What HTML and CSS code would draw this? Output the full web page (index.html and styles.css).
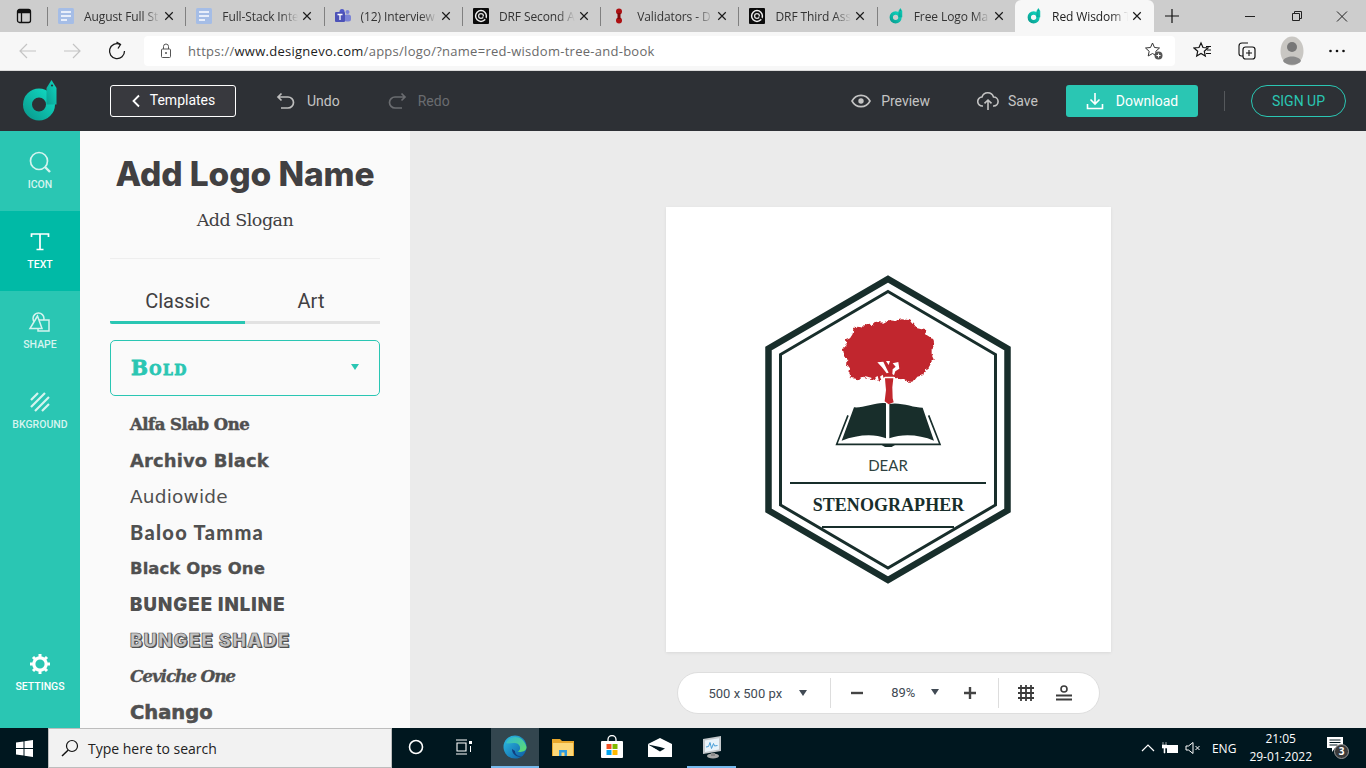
FILE: index.html
```html
<!DOCTYPE html>
<html lang="en">
<head>
<meta charset="utf-8">
<title>Red Wisdom Tree and Book</title>
<link rel="stylesheet" href="styles.css">
</head>
<body>
<svg class="defs" width="0" height="0">
  <defs>
    <linearGradient id="bg" x1="0" y1="1" x2="1" y2="0"><stop offset="0" stop-color="#0a9f92"/><stop offset="1" stop-color="#10d6bf"/></linearGradient>
    <filter id="rough" x="-5%" y="-5%" width="110%" height="110%"><feTurbulence type="fractalNoise" baseFrequency="0.09" numOctaves="2" seed="4"/><feDisplacementMap in="SourceGraphic" scale="11" xChannelSelector="R" yChannelSelector="G"/></filter>
  </defs>
  <symbol id="x" viewBox="0 0 12 12"><path d="M1.500 1.500l9 9M10.500 1.500l-9 9" fill="none" stroke="#1a1a1a" stroke-width="1.400"/></symbol>
  <symbol id="doc" viewBox="0 0 16 16"><rect width="16" height="16" rx="1.500" fill="#a5bde6"/><path d="M3 4h10M3 8h10M3 12h6" stroke="#e8eefa" stroke-width="1.800"/></symbol>
  <symbol id="swirl" viewBox="0 0 16 16"><rect width="16" height="16" rx="1" fill="#0b0b0b"/><circle cx="8" cy="8" r="5.400" fill="none" stroke="#eee" stroke-width="1.500"/><circle cx="8" cy="8" r="2.400" fill="none" stroke="#ddd" stroke-width="1.300"/><path d="M10.500 8.500l3 3" stroke="#0b0b0b" stroke-width="1.400"/></symbol>
  <symbol id="ring" viewBox="0 0 36 42">
    <circle cx="17" cy="24.500" r="11.500" fill="none" stroke="url(#bg)" stroke-width="9"/>
    <path d="M24.500 24.500V8l5-8 5 8v16.500z" fill="url(#bg)"/>
    <circle cx="30" cy="5.500" r="1.100" fill="#2d3035"/>
  </symbol>
</svg>

<header class="tabstrip">
  <div class="tabmenu">
    <svg width="16" height="16" viewBox="0 0 16 16"><rect x="1.500" y="1.500" width="13" height="13" rx="2" fill="none" stroke="#111" stroke-width="1.300"/><path d="M1.500 4.500h13M5.500 4.500v10" fill="none" stroke="#111" stroke-width="1.300"/><rect x="2" y="2" width="12" height="2.500" fill="#111"/></svg>
  </div>
  <div class="tab"><svg class="fav" viewBox="0 0 16 16"><use href="#doc"/></svg><span class="tabname">August Full St</span><svg class="tabx"><use href="#x"/></svg></div>
  <div class="tab"><svg class="fav" viewBox="0 0 16 16"><use href="#doc"/></svg><span class="tabname">Full-Stack Inte</span><svg class="tabx"><use href="#x"/></svg></div>
  <div class="tab"><svg class="fav" viewBox="0 0 16 16"><circle cx="12.500" cy="4" r="2" fill="#7b83d6"/><rect x="9" y="6.500" width="7" height="7" rx="2.500" fill="#7b83d6"/><circle cx="7" cy="3.500" r="2.500" fill="#5059c9"/><rect x="0" y="4" width="10" height="10" rx="1" fill="#4c52b8"/><path d="M2.500 6.500h5M5 6.500V12" stroke="#fff" stroke-width="1.300"/></svg><span class="tabname">(12) Interview</span><svg class="tabx"><use href="#x"/></svg></div>
  <div class="tab"><svg class="fav" viewBox="0 0 16 16"><use href="#swirl"/></svg><span class="tabname">DRF Second A</span><svg class="tabx"><use href="#x"/></svg></div>
  <div class="tab"><svg class="fav" viewBox="0 0 16 16"><circle cx="8" cy="3.500" r="3" fill="#ad1012"/><circle cx="8" cy="12.500" r="3" fill="#ad1012"/><rect x="6.500" y="5" width="3" height="6" fill="#7c0a0c"/></svg><span class="tabname">Validators - D</span><svg class="tabx"><use href="#x"/></svg></div>
  <div class="tab"><svg class="fav" viewBox="0 0 16 16"><use href="#swirl"/></svg><span class="tabname">DRF Third Ass</span><svg class="tabx"><use href="#x"/></svg></div>
  <div class="tab tab-last"><svg class="fav" viewBox="0 0 36 42"><use href="#ring"/></svg><span class="tabname">Free Logo Ma</span><svg class="tabx"><use href="#x"/></svg></div>
  <div class="tab tab-active"><svg class="fav" viewBox="0 0 36 42"><use href="#ring"/></svg><span class="tabname">Red Wisdom T</span><svg class="tabx"><use href="#x"/></svg></div>
  <div class="newtab"><svg width="16" height="16" viewBox="0 0 16 16"><path d="M8 1v14M1 8h14" stroke="#111" stroke-width="1.200"/></svg></div>
  <div class="winctl">
    <svg width="46" height="16" viewBox="0 0 46 16"><path d="M18 8.500h10" stroke="#222" stroke-width="1"/></svg>
    <svg width="46" height="16" viewBox="0 0 46 16"><path d="M19.500 5.500h7v7h-7zM21.500 5.500v-2h7v7h-2" fill="none" stroke="#222" stroke-width="1"/></svg>
    <svg width="46" height="16" viewBox="0 0 46 16"><path d="M18 3.500l10 10M28 3.500l-10 10" stroke="#222" stroke-width="1"/></svg>
  </div>
</header>

<nav class="toolbar">
  <svg class="nav-ic" width="20" height="20" viewBox="0 0 20 20"><path d="M18 10H2M9 3l-7 7 7 7" fill="none" stroke="#c4c4c4" stroke-width="1.200"/></svg>
  <svg class="nav-ic" width="20" height="20" viewBox="0 0 20 20"><path d="M2 10h16M11 3l7 7-7 7" fill="none" stroke="#c4c4c4" stroke-width="1.200"/></svg>
  <svg class="nav-ic" width="20" height="20" viewBox="0 0 20 20"><path d="M13 3.300A7.500 7.500 0 1 0 17.500 10" fill="none" stroke="#1a1a1a" stroke-width="1.300"/><path d="M9.500 1l4 2.500-2.500 4" fill="none" stroke="#1a1a1a" stroke-width="1.300"/></svg>
  <div class="omnibox">
    <svg class="lock" width="14" height="16" viewBox="0 0 14 16"><rect x="2.500" y="6" width="9" height="8.500" rx="1" fill="none" stroke="#555"/><path d="M4.500 6V3.500a2.500 2.500 0 0 1 5 0V6" fill="none" stroke="#555"/><circle cx="7" cy="10" r="1" fill="#555"/></svg>
    <span class="url"><span class="dim">https://</span><span class="host">www.designevo.com</span><span class="dim">/apps/logo/?name=red-wisdom-tree-and-book</span></span>
    <svg class="favadd" width="20" height="20" viewBox="0 0 20 20"><path d="M8.500 2l2 4.500 5 .5-3.700 3.300 1 4.700-4.300-2.500L4.200 15l1-4.700L1.500 7l5-.5z" fill="none" stroke="#333"/><circle cx="14.500" cy="14.500" r="4" fill="#555"/><path d="M12.500 14.500h4M14.500 12.500v4" stroke="#fff"/></svg>
  </div>
  <div class="browser-ic">
    <svg width="20" height="20" viewBox="0 0 20 20"><path d="M8 2l2 4.500 5 .5-3.700 3.300 1 4.700L8 12.500 3.700 15l1-4.700L1 7l5-.5z" fill="none" stroke="#111" stroke-width="1.200"/><path d="M13 5.500h5M14 9h4M13 12.500h5" stroke="#111"/></svg>
    <svg width="20" height="20" viewBox="0 0 20 20"><path d="M6 15H4.500A2.500 2.500 0 0 1 2 12.500V5a3 3 0 0 1 3-3h6" fill="none" stroke="#111" stroke-width="1.100"/><rect x="6" y="6" width="12" height="12" rx="2.500" fill="none" stroke="#111" stroke-width="1.200"/><path d="M12 9v6M9 12h6" stroke="#111" stroke-width="1.100"/></svg>
    <svg class="avatar" width="24" height="30" viewBox="0 0 24 30"><ellipse cx="12" cy="15" rx="11.500" ry="14.500" fill="#c9c7c3"/><circle cx="12" cy="11" r="5" fill="#777"/><path d="M3 25c2-6 16-6 18 0-3 5-15 5-18 0z" fill="#8a8a8a"/></svg>
    <svg width="20" height="20" viewBox="0 0 20 20"><circle cx="3.500" cy="10" r="1.300" fill="#111"/><circle cx="10" cy="10" r="1.300" fill="#111"/><circle cx="16.500" cy="10" r="1.300" fill="#111"/></svg>
  </div>
</nav>

<section class="appbar">
  <svg class="brand" width="36" height="42" viewBox="0 0 36 42"><use href="#ring"/></svg>
  <button class="btn-templates"><svg width="10" height="14" viewBox="0 0 10 14"><path d="M8 1.500L2.500 7 8 12.500" fill="none" stroke="#fff" stroke-width="1.800"/></svg><span class="tpl-label">Templates</span></button>
  <div class="action action-undo"><svg width="20" height="18" viewBox="0 0 20 18"><path d="M5.500 1.500L2 5l3.500 3.500M2 5h10a5.500 5.500 0 0 1 0 11H5" fill="none" stroke="#bdbdbd" stroke-width="1.700"/></svg>Undo</div>
  <div class="action action-redo"><svg width="20" height="18" viewBox="0 0 20 18"><path d="M14.500 1.500L18 5l-3.500 3.500M18 5H8a5.500 5.500 0 0 0 0 11h7" fill="none" stroke="#6a6c70" stroke-width="1.700"/></svg>Redo</div>
  <div class="spacer"></div>
  <div class="action action-preview"><svg width="20" height="14" viewBox="0 0 20 14"><path d="M1 7c4-7.500 14-7.500 18 0-4 7.500-14 7.500-18 0z" fill="none" stroke="#c4c4c4" stroke-width="1.600"/><circle cx="10" cy="7" r="2.700" fill="#c4c4c4"/></svg>Preview</div>
  <div class="action action-save"><svg width="22" height="20" viewBox="0 0 22 20"><path d="M6 15H5.500a4.500 4.500 0 0 1-.5-9 6 6 0 0 1 11.500 0 4.500 4.500 0 0 1 .2 9H16" fill="none" stroke="#c4c4c4" stroke-width="1.600"/><path d="M11 19V9M7.500 12.300L11 9l3.500 3.300" fill="none" stroke="#c4c4c4" stroke-width="1.600"/></svg>Save</div>
  <button class="btn-download"><svg width="18" height="18" viewBox="0 0 18 18"><path d="M9 1v11M4.500 7.500L9 12l4.500-4.500M1.500 12v4.500h15V12" fill="none" stroke="#fff" stroke-width="1.600"/></svg>Download</button>
  <span class="vsep"></span>
  <button class="btn-signup">SIGN UP</button>
</section>

<main class="workspace">
  <aside class="rail">
    <div class="rail-item">
      <svg width="24" height="24" viewBox="0 0 24 24"><circle cx="11" cy="11" r="8.500" fill="none" stroke="#d5f4ef" stroke-width="1.700"/><path d="M17 17l5 5" stroke="#d5f4ef" stroke-width="2.400"/></svg>
      <span>ICON</span>
    </div>
    <div class="rail-item rail-active">
      <svg width="24" height="24" viewBox="0 0 24 24"><path d="M3.500 7V4h17v3M12 4v15M8.500 19.500h7" fill="none" stroke="#fff" stroke-width="1.700"/></svg>
      <span>TEXT</span>
    </div>
    <div class="rail-item">
      <svg width="24" height="24" viewBox="0 0 24 24"><circle cx="10.500" cy="8.500" r="5.500" fill="none" stroke="#d5f4ef" stroke-width="1.500"/><rect x="10" y="10" width="11" height="11" fill="#2ac6b3" stroke="#d5f4ef" stroke-width="1.500"/><path d="M9.500 6L2 18.500h12z" fill="#2ac6b3" stroke="#d5f4ef" stroke-width="1.500"/></svg>
      <span>SHAPE</span>
    </div>
    <div class="rail-item">
      <svg width="24" height="24" viewBox="0 0 24 24"><path d="M3 10L10 3M3 17L17 3M7 21L21 7M14 21l7-7" stroke="#d5f4ef" stroke-width="2.200" fill="none"/></svg>
      <span>BKGROUND</span>
    </div>
    <div class="rail-item rail-settings">
      <svg width="24" height="24" viewBox="0 0 24 24"><circle cx="12" cy="12" r="6.200" fill="none" stroke="#fff" stroke-width="3.200"/><path d="M12 2v3.500M12 18.500V22M2 12h3.500M18.500 12H22M5 5l2.500 2.500M16.500 16.500L19 19M19 5l-2.500 2.500M7.500 16.500L5 19" stroke="#fff" stroke-width="3"/></svg>
      <span>SETTINGS</span>
    </div>
  </aside>

  <section class="panel">
    <h1 class="logo-name">Add Logo Name</h1>
    <p class="logo-slogan">Add Slogan</p>
    <hr class="panel-rule">
    <div class="font-tabs">
      <span class="font-tab font-tab-on">Classic</span>
      <span class="font-tab font-tab-art">Art</span>
    </div>
    <div class="font-select"><span>Bold</span><i class="caret"></i></div>
    <ul class="font-list">
      <li class="f-alfa">Alfa Slab One</li>
      <li class="f-archivo">Archivo Black</li>
      <li class="f-audio">Audiowide</li>
      <li class="f-baloo">Baloo Tamma</li>
      <li class="f-ops">Black Ops One</li>
      <li class="f-inline">BUNGEE INLINE</li>
      <li class="f-shade">BUNGEE SHADE</li>
      <li class="f-ceviche">Ceviche One</li>
      <li class="f-chango">Chango</li>
    </ul>
  </section>

  <section class="stage">
    <div class="canvas">
      <svg class="logo" width="445" height="445" viewBox="666 207 445 445">
        <path d="M888 279L1007.500 348.500V510.500L888 580 768.500 510.500V348.500z" fill="none" stroke="#182e2b" stroke-width="6.500"/>
        <path d="M888 291.500L995.500 354.500V505L888 568 780.500 505V354.500z" fill="none" stroke="#182e2b" stroke-width="3"/>
        <g transform="translate(830 310) scale(.3333)">
          <path filter="url(#rough)" fill="#c1272d" d="M70 60L80 50 95 52 105 42 125 45 135 35 160 38 175 30 195 33 215 28 235 30 248 38 262 55 285 60 290 75 310 88 313 105 305 118 305 135 312 150 303 160 295 175 285 178 280 195 262 200 250 215 235 215 222 207 205 208 195 200 165 200 150 212 135 210 115 205 100 200 85 208 65 205 58 190 60 175 48 160 52 150 42 135 38 118 50 105 48 90 60 85 68 72z"/>
          <path fill="#c1272d" d="M165 205L190 205 187 232 188 265 191 277 176 283 164 274 168 240 166 218z"/>
          <path fill="#fff" d="M142 157L160 155 170 176 176 188 170 190 156 172zM168 153L180 153 176 165zM188 160L205 156 208 176 196 184 192 196 187 192 188 178 197 170zM104 198L124 203 124 208 108 204zM136 202L143 198 146 210 138 210zM150 200L158 194 162 208 154 210z"/>
          <path fill="#182e2b" d="M72 292C100 295 140 275 168 280V385C130 370 80 375 35 392zM178 282C210 275 250 293 278 293L312 392C270 375 220 370 178 385z"/>
          <path d="M54 316L20 403H330L296 316" fill="none" stroke="#182e2b" stroke-width="5"/>
          <path d="M155 405H195L185 411H165z" fill="#182e2b"/>
        </g>
        <path class="rule" d="M790 483h196M822 527h132" stroke="#182e2b" stroke-width="1.800"/>
        <text class="logo-dear" x="888" y="470.500" text-anchor="middle">DEAR</text>
        <text class="logo-steno" x="888.500" y="510.500" text-anchor="middle">STENOGRAPHER</text>
      </svg>
    </div>
    <div class="canvas-bar">
      <span class="size">500 x 500 px</span><i class="caret-dark caret-size"></i>
      <span class="bar-sep"></span>
      <svg class="minus" width="12" height="12" viewBox="0 0 12 12"><path d="M0 6h12" stroke="#444" stroke-width="2.400"/></svg>
      <span class="zoomv">89%</span><i class="caret-dark caret-zoom"></i>
      <svg class="plus" width="12" height="12" viewBox="0 0 12 12"><path d="M0 6h12M6 0v12" stroke="#444" stroke-width="2.400"/></svg>
      <span class="bar-sep bar-sep2"></span>
      <svg class="grid" width="16" height="16" viewBox="0 0 16 16"><path d="M0 3h16M0 8h16M0 13h16M3 0v16M8 0v16M13 0v16" stroke="#3c3c3c" stroke-width="1.800"/></svg>
      <svg class="align" width="16" height="16" viewBox="0 0 16 16"><circle cx="8" cy="4" r="3" fill="none" stroke="#3c3c3c" stroke-width="1.600"/><path d="M0 10.500h16M0 14.500h16" stroke="#3c3c3c" stroke-width="2"/></svg>
    </div>
  </section>
</main>

<footer class="taskbar">
  <div class="start"><svg width="17" height="17" viewBox="0 0 17 17"><path d="M0 2.500L7.500 1.400V8H0zM8.500 1.300L17 0v8H8.500zM0 9h7.500v6.600L0 14.500zM8.500 9H17v8l-8.500-1.300z" fill="#fff"/></svg></div>
  <div class="searchbox"><svg width="18" height="18" viewBox="0 0 18 18"><circle cx="11" cy="7" r="5.500" fill="none" stroke="#111" stroke-width="1.200"/><path d="M7 11.200L1 17" stroke="#111" stroke-width="1.500"/></svg><span>Type here to search</span></div>
  <div class="task task-cortana"><svg width="16" height="16" viewBox="0 0 16 16"><circle cx="8" cy="8" r="6.500" fill="none" stroke="#fff" stroke-width="1.600"/></svg></div>
  <div class="task task-view"><svg width="18" height="16" viewBox="0 0 18 16"><path d="M1 1h11M1 15h11M2 4h9v8H2z" fill="none" stroke="#fff" stroke-width="1.100"/><rect x="14" y="2" width="3" height="3" fill="#fff"/><path d="M15.500 7v6" stroke="#fff"/></svg></div>
  <div class="task task-on"><svg width="24" height="24" viewBox="0 0 24 24"><defs><linearGradient id="eg" x1="0" y1="0" x2="1" y2="1"><stop offset="0" stop-color="#2fc1e3"/><stop offset="1" stop-color="#0c59a4"/></linearGradient><linearGradient id="eh" x1="0" y1="0" x2="1" y2="1"><stop offset="0" stop-color="#2fb8d8"/><stop offset="1" stop-color="#5fdd6b"/></linearGradient></defs><circle cx="12" cy="12" r="11.500" fill="url(#eg)"/><path d="M3 8C6 0 20-1 23.500 12c.300 4-5 6-9 4.500 4-1 3.500-8-2.500-8.500C8 7.700 5 9 3 8z" fill="url(#eh)"/><path d="M9 14c0 5 5 9.500 10 7-5 .5-7-2-7-5z" fill="#123f7e"/></svg></div>
  <div class="task"><svg width="22" height="20" viewBox="0 0 22 20"><path d="M0 2h8l2 2h12v15H0z" fill="#e8a72b"/><path d="M1 6h20v13H1z" fill="#fcd777"/><path d="M7 19v-6h8v6h-2.500v-3.500h-3V19z" fill="#2f9ce0"/></svg></div>
  <div class="task task-store"><svg width="24" height="24" viewBox="0 0 24 24"><path d="M8 7V4.500a4 4 0 0 1 8 0V7" fill="none" stroke="#fff" stroke-width="1.300"/><rect x="1" y="6" width="22" height="17" rx="1" fill="#fff"/><rect x="6.500" y="9" width="5" height="5" fill="#f25022"/><rect x="12.500" y="9" width="5" height="5" fill="#7fba00"/><rect x="6.500" y="15" width="5" height="5" fill="#00a4ef"/><rect x="12.500" y="15" width="5" height="5" fill="#ffb900"/></svg></div>
  <div class="task"><svg width="24" height="19" viewBox="0 0 24 19"><path d="M0 6l12-6 12 6v13H0z" fill="#fff"/><path d="M0 6.500l12 7 5-3-5-1.500z" fill="#00171f"/><path d="M0 7l9 5-9 6zM24 7l-7 4 7 7z" fill="#fff"/></svg></div>
  <div class="task task-run"><svg width="24" height="24" viewBox="0 0 24 24"><path d="M3 4l18-3v15L3 19z" fill="#c5c9cc"/><path d="M5 5.500l14-2.300V14.500L5 17z" fill="#e9f3fa"/><path d="M6 12l2.500-.5 1.500-4 1.500 6 2-5 1 2.500 3-.5" fill="none" stroke="#4a9fd8"/><ellipse cx="13" cy="21" rx="6" ry="2.500" fill="#a8a8a8"/><rect x="11" y="18" width="4" height="3" fill="#8a8a8a"/></svg></div>
  <div class="spacer"></div>
  <div class="tray">
    <svg width="14" height="10" viewBox="0 0 14 10"><path d="M1 8l6-6 6 6" fill="none" stroke="#fff" stroke-width="1.200"/></svg>
    <svg width="16" height="14" viewBox="0 0 16 14"><rect x="5" y="4" width="11" height="8" fill="#fff"/><path d="M1 1v3M4 1v3M0 4h5v3H3v5H2V7H0z" fill="#fff" stroke="#fff" stroke-width=".6"/></svg>
    <svg width="16" height="14" viewBox="0 0 16 14"><path d="M1 5h2.500L8 1.500v11L3.500 9H1z" fill="none" stroke="#fff"/><path d="M10.500 5l4 4M14.500 5l-4 4" stroke="#fff"/></svg>
    <span class="lang">ENG</span>
    <div class="clock"><span>21:05</span><span>29-01-2022</span></div>
    <div class="notif"><svg width="16" height="15" viewBox="0 0 16 15"><path d="M0 0h16v11H8l-3 4v-4H0z" fill="#fff"/><path d="M2.500 3h11M2.500 5.500h11M2.500 8h8" stroke="#00171f"/></svg><b class="badge">3</b></div>
  </div>
</footer>
</body>
</html>
```
FILE: styles.css
```css
* { box-sizing: border-box; }
html, body { margin: 0; padding: 0; }
body {
  width: 1366px;
  height: 768px;
  overflow: hidden;
  display: flex;
  flex-direction: column;
  font-family: Roboto, "Liberation Sans", sans-serif;
  background: #ebebeb;
}
.defs { position: absolute; }
.spacer { flex: 1; }

/* browser tab strip */
.tabstrip {
  height: 32px;
  flex: none;
  display: flex;
  align-items: stretch;
  background: #cdcdcd;
}
.tabmenu {
  width: 47px;
  display: flex;
  align-items: center;
  justify-content: center;
}
.tab {
  width: 138.3px;
  flex: none;
  display: flex;
  align-items: center;
  padding-left: 11px;
  position: relative;
  font: 12px "Open Sans", "Noto Sans", sans-serif;
  color: #333;
}
.tab::before {
  content: "";
  position: absolute;
  left: 0;
  top: 7px;
  height: 19px;
  width: 1px;
  background: #808080;
}
.tab-active {
  width: 139px;
  background: #f7f7f7;
  border-radius: 6px 6px 0 0;
  color: #222;
  height: 32px;
}
.tab-active::before { display: none; }
.fav { width: 16px; height: 16px; flex: none; }
.tabname {
  margin-left: 10px;
  width: 76px;
  white-space: nowrap;
  letter-spacing: -.1px;
  -webkit-mask-image: linear-gradient(90deg, #000 78%, transparent);
  mask-image: linear-gradient(90deg, #000 78%, transparent);
}
.tabx { width: 10px; height: 10px; margin-left: 4px; flex: none; }
.newtab {
  width: 35px;
  display: flex;
  align-items: center;
  justify-content: center;
}
.winctl {
  margin-left: auto;
  display: flex;
  align-items: center;
  padding-right: 1px;
}

/* address row */
.toolbar {
  height: 39px;
  flex: none;
  display: flex;
  align-items: center;
  background: #f7f7f7;
  border-bottom: 1px solid #dadada;
  padding-left: 18px;
}
.nav-ic { margin-right: 24px; flex: none; }
.nav-ic:nth-child(2) { margin-right: 25px; }
.nav-ic:nth-child(3) { margin-right: 17px; }
.omnibox {
  width: 1031px;
  height: 30px;
  margin-top: -1px;
  background: #fff;
  border-radius: 4px;
  display: flex;
  align-items: center;
  padding-left: 15px;
}
.lock { flex: none; }
.url {
  margin-left: 15px;
  font: 13px "Open Sans", "Noto Sans", sans-serif;
  letter-spacing: .27px;
  white-space: nowrap;
  color: #6a6a6a;
}
.host { color: #1c1c1c; }
.favadd { margin-left: auto; margin-right: 11px; }
.browser-ic {
  display: flex;
  align-items: center;
  margin-left: 18px;
  gap: 24px;
}
.avatar { margin-left: -1px; margin-right: -1px; }

/* editor top bar */
.appbar {
  height: 60px;
  flex: none;
  display: flex;
  align-items: center;
  background: #2d3035;
  padding-left: 22px;
  padding-right: 20px;
  color: #c4c4c4;
  font-size: 14px;
}
.brand { flex: none; margin-top: -1px; }
.btn-templates {
  margin-left: 52px;
  width: 126px;
  height: 32px;
  margin-top: -1px;
  display: flex;
  align-items: center;
  justify-content: center;
  gap: 9px;
  border: 1px solid #fff;
  border-radius: 3px;
  background: #38393e;
  color: #fff;
  font: 14px Roboto, sans-serif;
}
.tpl-label { margin-top: -2px; }
.action { display: flex; align-items: center; gap: 10px; }
.action-undo { margin-left: 40px; gap: 11px; }
.action-redo { margin-left: 47px; color: #6a6c70; gap: 11px; }
.action-preview { gap: 10px; }
.action-save { margin-left: 47px; gap: 9px; }
.btn-download {
  margin-left: 28px;
  width: 132px;
  height: 32px;
  display: flex;
  align-items: center;
  justify-content: center;
  gap: 12px;
  border: 0;
  border-radius: 3px;
  background: #2ac6b3;
  color: #fff;
  font: 14px Roboto, sans-serif;
}
.vsep { width: 1px; height: 20px; background: #55585c; margin-left: 26px; }
.btn-signup {
  margin-left: 26px;
  width: 95px;
  height: 32px;
  border: 1px solid #2ac6b3;
  border-radius: 16px;
  background: none;
  color: #2ac6b3;
  font: 14px Roboto, sans-serif;
}

/* workspace */
.workspace { flex: 1; min-height: 0; display: flex; }
.rail {
  width: 80px;
  flex: none;
  display: flex;
  flex-direction: column;
  background: #2ac6b3;
}
.rail-item {
  height: 80px;
  flex: none;
  display: flex;
  flex-direction: column;
  align-items: center;
  padding-top: 19px;
  gap: 4px;
  color: #d5f4ef;
  font-size: 10.5px;
  font-weight: 500;
}
.rail-active { background: #00baa6; color: #fff; }
.rail-settings { margin-top: auto; margin-bottom: 17px; color: #fff; padding-top: 21px; }

.panel {
  width: 330px;
  flex: none;
  background: #fafafa;
  padding: 0 30px;
  overflow: hidden;
}
.logo-name {
  margin: 24px 0 0;
  text-align: center;
  font: 800 33.5px/38px Inter, "Open Sans", sans-serif;
  letter-spacing: -.1px;
  color: #414042;
}
.logo-slogan {
  margin: 15px 0 0;
  text-align: center;
  font: 17.5px/24px "DejaVu Serif", "Liberation Serif", serif;
  letter-spacing: -.5px;
  color: #414042;
}
.panel-rule {
  margin: 26px 0 0;
  border: 0;
  border-top: 1px solid #eee;
}
.font-tabs {
  display: flex;
  margin-top: 28px;
  height: 37px;
  background: linear-gradient(#e2e2e2, #e2e2e2) bottom / 100% 3px no-repeat;
}
.font-tab {
  width: 50%;
  text-align: center;
  font-size: 20px;
  line-height: 28px;
  color: #414042;
}
.font-tab-art { padding-right: 3px; }
.font-tab-on {
  border-bottom: 3px solid #2ac6b3;
  border-radius: 0 0 0 2px;
}
.font-select {
  margin-top: 16px;
  height: 56px;
  border: 1px solid #2ac6b3;
  border-radius: 5px;
  display: flex;
  align-items: center;
  justify-content: space-between;
  padding: 0 20px;
  color: #2ac6b3;
  font: 900 20px "DejaVu Serif", serif;
  font-variant: small-caps;
  letter-spacing: 1.4px;
  -webkit-text-stroke: .8px #2ac6b3;
}
.caret {
  border: 4px solid transparent;
  border-top: 6px solid #2ac6b3;
  border-bottom: 0;
  margin-top: -3px;
}
.font-list {
  list-style: none;
  margin: 10px 0 0;
  padding: 0 0 0 20px;
  color: #505050;
}
.font-list li {
  height: 36px;
  display: flex;
  align-items: center;
  white-space: nowrap;
}
.font-list .f-alfa { font: 700 16.5px "DejaVu Serif", serif; letter-spacing: -.5px; -webkit-text-stroke: .5px #505050; }
.font-list .f-archivo { font: 700 18px "DejaVu Sans", sans-serif; letter-spacing: .1px; -webkit-text-stroke: .3px #505050; }
.font-list .f-audio { font: 400 18.5px "DejaVu Sans", sans-serif; letter-spacing: .2px; }
.font-list .f-baloo { font-family: Lato, sans-serif; font-size: 20px; font-weight: 900; letter-spacing: 1.3px; }
.font-list .f-ops { font: 700 16.5px "DejaVu Sans", sans-serif; letter-spacing: .05px; -webkit-text-stroke: .3px #505050; }
.font-list .f-inline { font: 900 18.5px Inter, sans-serif; letter-spacing: 1.1px; }
.font-list .f-shade {
  font: 900 18.5px Inter, sans-serif;
  letter-spacing: 1.2px;
  color: #c4c4c4;
  -webkit-text-stroke: .7px #505050;
  text-shadow: 1px 1px 0 #505050;
}
.font-list .f-ceviche { font: italic 700 17px "DejaVu Serif", serif; letter-spacing: -1.2px; -webkit-text-stroke: .3px #505050; }
.font-list .f-chango { font: 700 19.5px "DejaVu Sans", sans-serif; -webkit-text-stroke: .6px #505050; }

/* canvas */
.stage {
  flex: 1;
  min-width: 0;
  display: flex;
  flex-direction: column;
  align-items: center;
  padding-top: 76px;
  background: #ebebeb;
}
.canvas {
  width: 445px;
  height: 445px;
  background: #fff;
  box-shadow: 0 1px 3px rgba(0, 0, 0, .08);
}
.logo { display: block; }
.logo-dear { font: 15px Lato, sans-serif; fill: #2e4240; }
.logo-steno { font: 700 18px "Liberation Serif", serif; letter-spacing: .05px; fill: #182e2b; }
.canvas-bar {
  margin-top: 20px;
  width: 423px;
  height: 42px;
  display: flex;
  align-items: center;
  padding-left: 31px;
  background: #fff;
  border: 1px solid #dedede;
  border-radius: 21px;
  font-size: 13px;
  color: #414a54;
}
.caret-dark {
  border: 4px solid transparent;
  border-top: 6px solid #414a54;
  border-bottom: 0;
  margin-left: 16px;
}
.caret-size { margin-left: 17px; }
.caret-zoom { margin-top: -3px; }
.bar-sep { width: 1px; height: 30px; background: #ddd; margin-left: 23px; }
.bar-sep2 { margin-left: 22px; }
.minus { margin-left: 20px; }
.zoomv { margin-left: 28px; margin-top: -1px; }
.plus { margin-left: 25px; }
.grid { margin-left: 19px; }
.align { margin-left: 22px; }

/* windows taskbar */
.taskbar {
  height: 40px;
  flex: none;
  display: flex;
  align-items: stretch;
  background: #00171f;
  color: #fff;
}
.start { width: 48px; display: flex; align-items: center; justify-content: center; }
.searchbox {
  width: 344px;
  display: flex;
  align-items: center;
  gap: 9px;
  padding-left: 12px;
  background: #f2f2f2;
  border: 1px solid #bdbdbd;
  color: #222;
  font: 14px "Open Sans", sans-serif;
}
.task {
  width: 48px;
  display: flex;
  align-items: center;
  justify-content: center;
  border-bottom: 2px solid transparent;
}
.task-cortana { width: 48px; }
.task-view { width: 51px; padding-right: 4px; }
.task-on { background: #33464f; border-bottom-color: #76b9ed; }
.task-store { width: 49px; }
.task-run { border-bottom-color: #76b9ed; margin-left: 3px; width: 49px; }
.tray {
  display: flex;
  align-items: center;
  gap: 7px;
  padding-right: 21px;
  font: 12px "Open Sans", sans-serif;
}
.lang { margin-left: 4px; }
.clock {
  display: flex;
  flex-direction: column;
  align-items: center;
  line-height: 18px;
  margin-left: 6px;
}
.notif { position: relative; margin-left: 8px; width: 18px; height: 18px; margin-top: -4px; }
.badge {
  position: absolute;
  left: 7px;
  top: 7px;
  width: 15px;
  height: 15px;
  border-radius: 50%;
  background: #3a3a3a;
  border: 1px solid #999;
  font: 700 10px/13px "Open Sans", sans-serif;
  text-align: center;
}
```
